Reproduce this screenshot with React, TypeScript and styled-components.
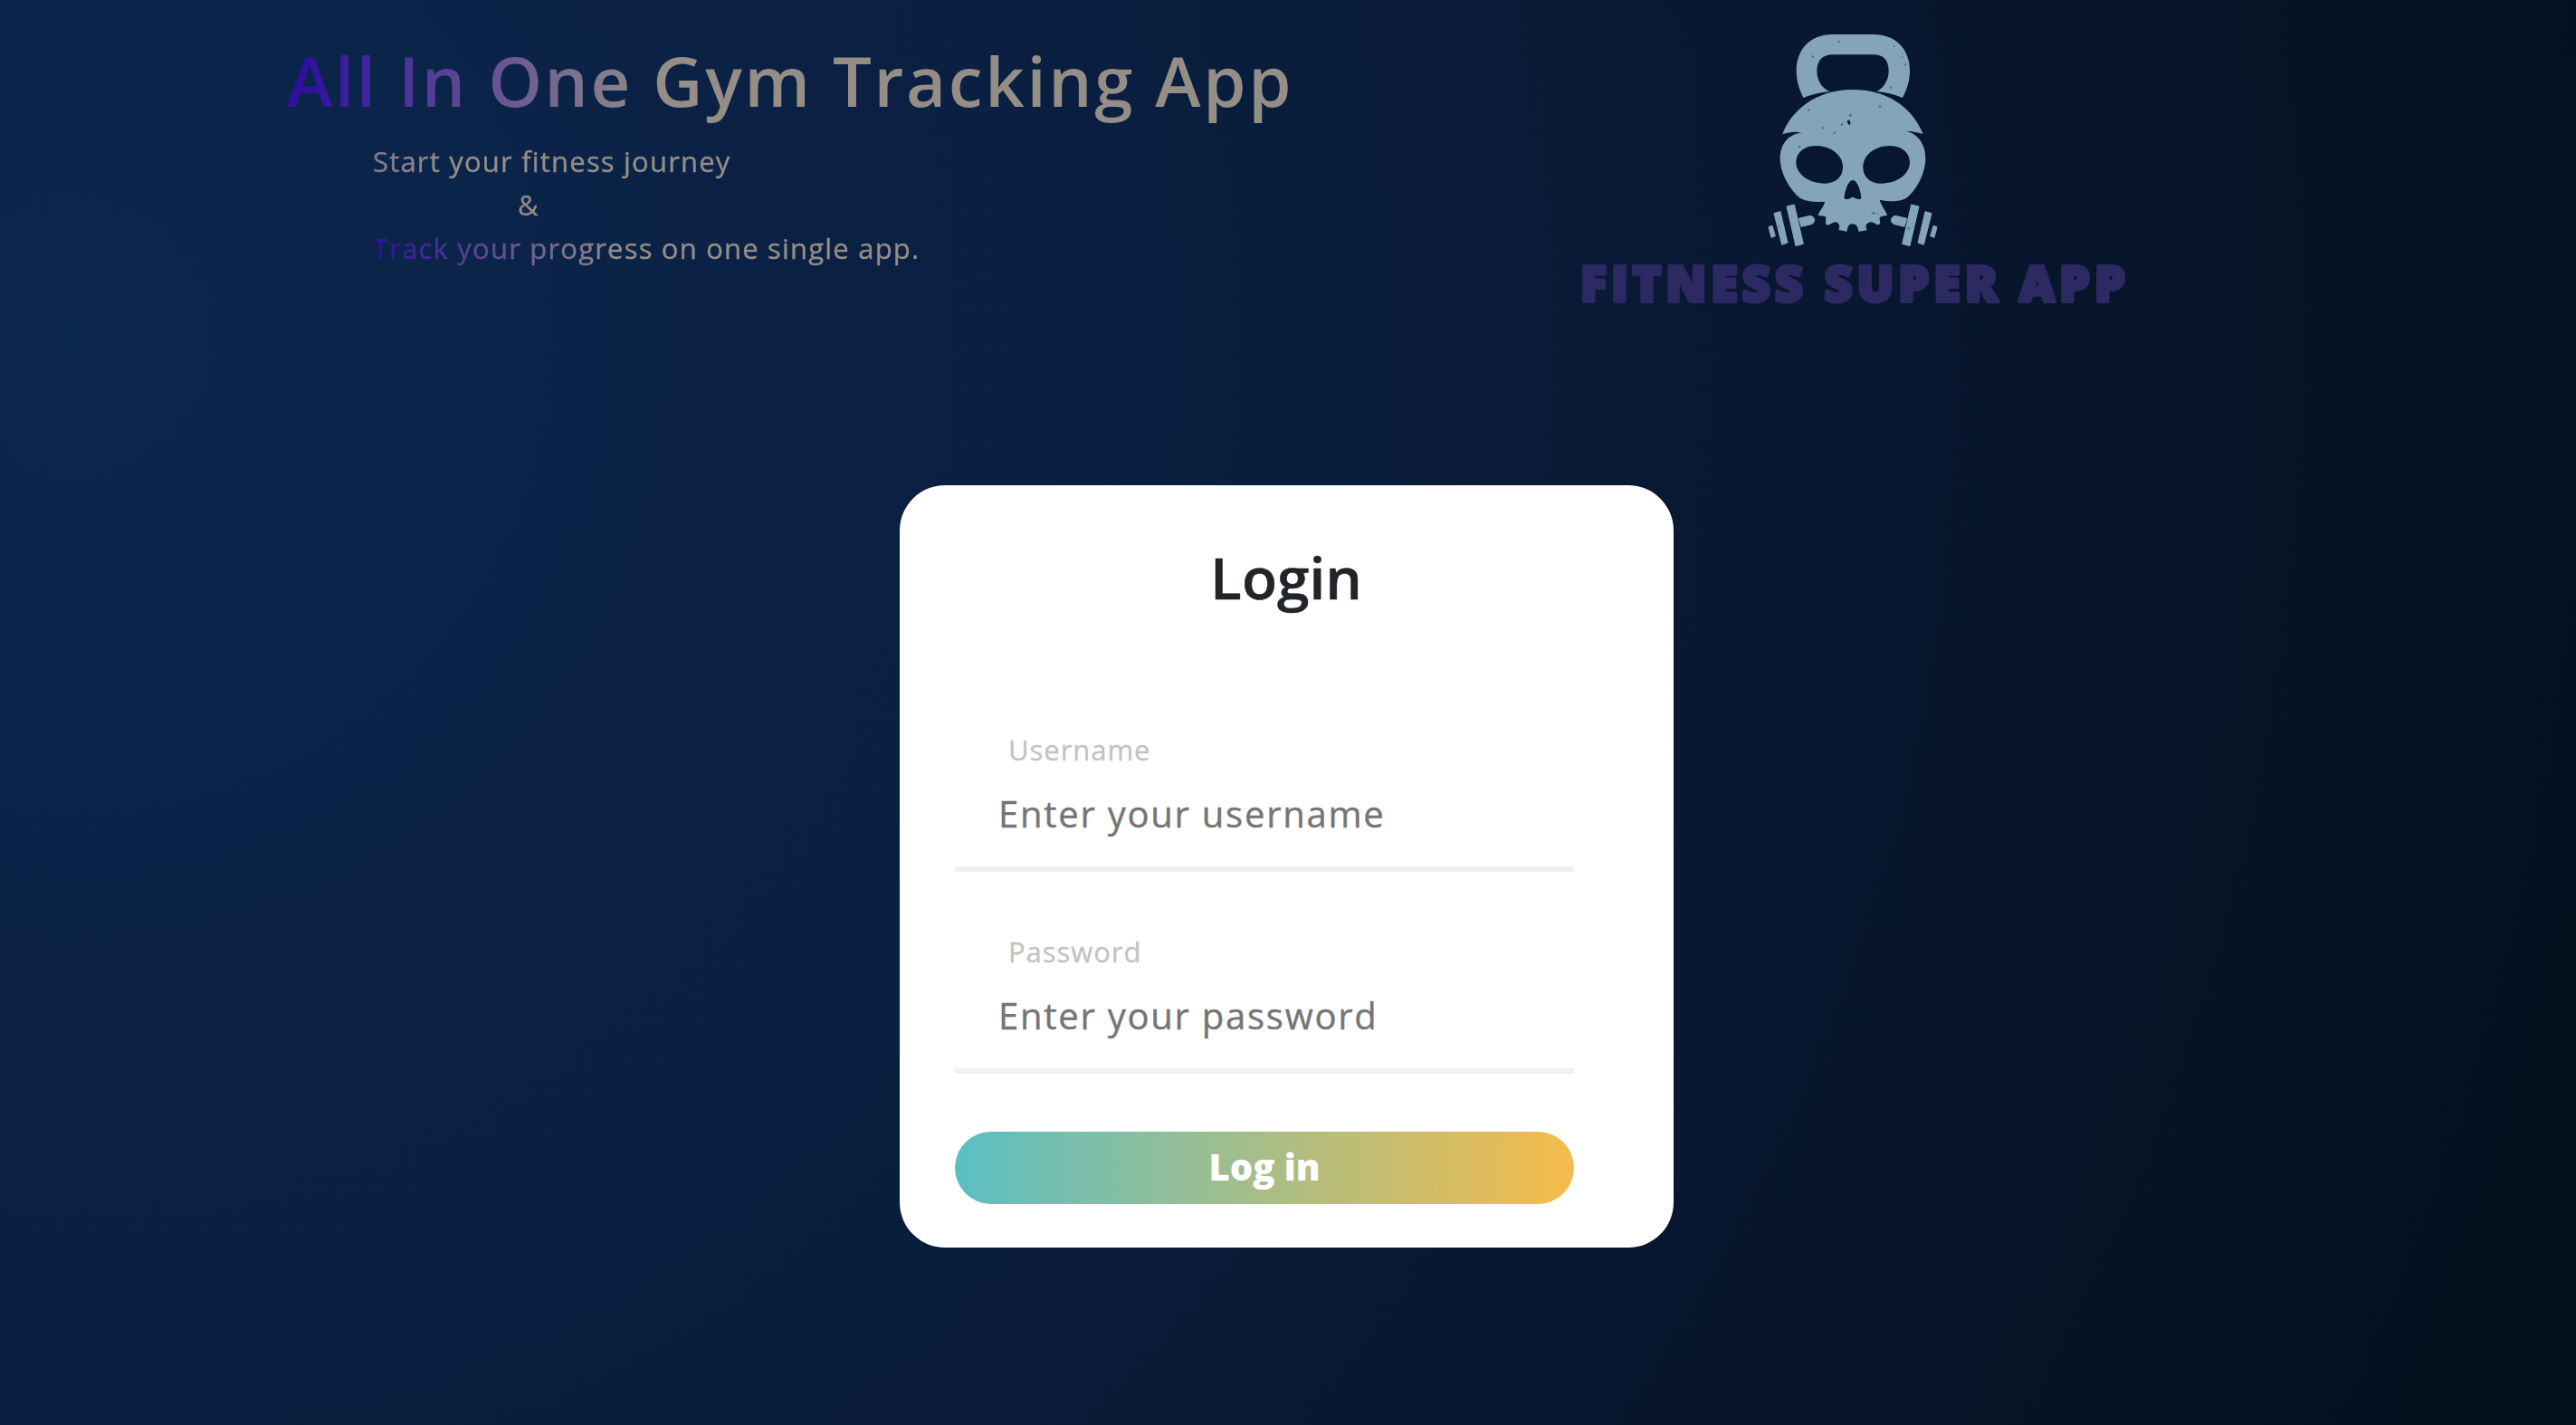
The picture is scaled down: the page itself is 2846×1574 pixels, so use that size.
import React from 'react';
import styled, { createGlobalStyle } from 'styled-components';

const GlobalStyle = createGlobalStyle`
  *, *::before, *::after { box-sizing: border-box; }
  body { margin: 0; background: #04101c; font-family: "Open Sans", "Noto Sans", sans-serif; }
`;

const Page = styled.main`
  display: flex;
  flex-direction: column;
  align-items: flex-start;
  width: 2846px;
  height: 1574px;
  overflow: hidden;
  background: radial-gradient(circle 3150px at 80px 370px, #0b284f 0%, #0b2246 22%, #0a1e3f 38%, #081832 60%, #061427 76%, #05101e 92%);
`;

const Header = styled.header`
  display: flex;
  width: 100%;
  height: 536px;
`;

const Hero = styled.section`
  width: 1748px;
  padding: 39px 0 0 317px;
`;

const GradientText = styled.span<{ $from: string; $start: number; $end: number }>`
  background: linear-gradient(to right, ${p => p.$from} ${p => p.$start}px, #948e87 ${p => p.$end}px);
  background-clip: text;
  -webkit-background-clip: text;
  color: transparent;
`;

const Title = styled.h1`
  margin: 0;
  font-size: 76px;
  font-weight: 600;
  line-height: 100px;
  letter-spacing: 2.65px;
  white-space: nowrap;
`;

const Tagline = styled.p`
  display: flex;
  flex-direction: column;
  align-items: flex-start;
  margin: 15px 0 0;
  padding-left: 95px;
  font-size: 31px;
  line-height: 48px;
  letter-spacing: 1.2px;
  -webkit-text-stroke: 0.4px transparent;
`;

const Ampersand = styled.span`
  padding-left: 160px;
`;

const Brand = styled.figure`
  display: flex;
  flex-direction: column;
  align-items: center;
  width: 600px;
  margin: 0;
  padding-top: 20px;
`;

const Emblem = styled.svg`
  display: block;
  width: 240px;
  height: 260px;
  margin-left: 3px;
`;

const BrandName = styled.svg`
  display: block;
  width: 600px;
  height: 68px;
  overflow: visible;
  font: 800 54px "Open Sans", "Noto Sans", sans-serif;
`;

const Card = styled.section`
  display: flex;
  flex-direction: column;
  width: 855px;
  height: 842px;
  margin-left: 994px;
  padding: 58px 110px 48px 61px;
  border-radius: 50px;
  background: #fff;
`;

const CardTitle = styled.h2`
  width: 732px;
  margin: 0;
  font: 600 64px/87px "Open Sans", "Noto Sans", sans-serif;
  text-align: center;
  color: #212529;
  -webkit-text-stroke: 0.5px #212529;
`;

const Form = styled.form`
  display: flex;
  flex-direction: column;
  margin-top: 123px;
`;

const Field = styled.div`
  display: flex;
  flex-direction: column;
  height: 159px;
  margin-bottom: 64px;
  border-bottom: 6px solid #f0f0f0;
`;

const Label = styled.label`
  padding-left: 59px;
  font-size: 31px;
  line-height: 48px;
  letter-spacing: 0.95px;
  color: #c2c2c2;
  -webkit-text-stroke: 0.3px #c2c2c2;
`;

const Input = styled.input`
  width: 100%;
  height: 80px;
  margin-top: 6px;
  padding: 0 0 0 48px;
  border: 0;
  outline: 0;
  background: transparent;
  font: 400 40px "Open Sans", "Noto Sans", sans-serif;
  letter-spacing: 1.75px;
  &::placeholder { color: #757575; opacity: 1; -webkit-text-stroke: 0.4px #757575; }
`;

const Submit = styled.button`
  height: 80px;
  padding: 0 0 4px;
  border: 0;
  border-radius: 40px;
  background: linear-gradient(to right, #5bbfc4, #f5bc4b);
  color: #fff;
  font: 800 40px "Open Sans", "Noto Sans", sans-serif;
`;

const DUMBBELL = (
  <>
    <path d="M172 664 L205 656 A14 14 0 0 1 214 683 L180 691 Z" />
    <path d="M132 624 L157 618 L187 748 L162 755 Z" />
    <path d="M90 647 L111 641 L135 744 L116 751 Z" />
    <path d="M72 692 L84 688 L94 722 L81 727 Z" />
  </>
);

const SPECKS = [
  [306, 78, 4], [218, 128, 4], [488, 93, 3], [515, 128, 3], [525, 154, 4], [476, 230, 4],
  [205, 305, 4], [441, 293, 4], [343, 322, 5], [315, 352, 4], [252, 364, 4], [290, 380, 4],
  [174, 427, 4], [176, 382, 3], [419, 646, 5], [433, 648, 3], [105, 691, 3], [537, 697, 4],
];

function KettlebellSkull() {
  return (
    <Emblem viewBox="0 0 720 780" fill="#84a5b9">
      <path
        fillRule="evenodd"
        d="M187 264 C174 236 164 210 164 174 C164 104 210 54 284 54 L420 54 C494 54 540 104 540 174 C540 210 530 236 516 264 C490 253 462 246 430 243 C456 230 470 204 470 174 C470 140 452 121 420 121 L284 121 C252 121 232 140 232 174 C232 206 247 232 275 243 C243 246 214 253 187 264 Z"
      />
      <path
        fillRule="evenodd"
        d="M118 384 C154 292 244 237 351 237 C458 237 546 290 584 384 C565 378 546 374 526 374 C568 382 592 420 592 464 C592 516 560 574 526 598 C504 610 470 608 440 602 C444 620 460 636 465 654 C456 656 444 655 440 662 C438 670 446 678 438 684 C428 688 424 676 410 676 C396 678 390 690 398 701 C388 706 378 706 370 707 C368 690 362 682 350 682 C338 682 333 692 332 707 C324 706 312 704 304 701 C310 690 306 678 294 676 C280 676 274 690 264 684 C256 678 266 664 260 658 C254 654 244 656 236 654 C240 636 256 626 258 608 C230 610 196 608 176 596 C140 566 110 512 110 464 C110 420 136 384 180 380 C158 374 140 380 118 384 Z
        M228 423 C186 423 163 448 163 478 C163 516 204 548 258 548 C296 548 318 524 318 494 C318 456 282 423 228 423 Z
        M474 423 C516 423 540 448 540 478 C540 516 500 548 446 548 C406 548 385 524 385 494 C385 456 422 423 474 423 Z
        M351 537 C334 537 322 584 323 596 C327 605 339 598 351 593 C363 598 375 605 379 596 C380 584 368 537 351 537 Z"
      />
      <g stroke="#84a5b9" strokeWidth="3" strokeLinejoin="round">
        {DUMBBELL}
        <g transform="translate(702 0) scale(-1 1)">{DUMBBELL}</g>
      </g>
      <g fill="#54748a">
        {SPECKS.map(([x, y, r]) => (
          <circle key={`${x}-${y}`} cx={x} cy={y} r={r} />
        ))}
      </g>
      <path fill="#0b1f3a" d="M331 341 L340 337 L344 350 L338 355 Z" />
    </Emblem>
  );
}

export default function App() {
  return (
    <>
      <GlobalStyle />
      <Page>
        <Header>
          <Hero>
            <Title>
              <GradientText $from="#2f109f" $start={20} $end={410}>All In One Gym Tracking App</GradientText>
            </Title>
            <Tagline>
              <GradientText $from="#877690" $start={0} $end={90}>Start your fitness journey</GradientText>
              <Ampersand>
                <GradientText $from="#8e8589" $start={0} $end={30}>&amp;</GradientText>
              </Ampersand>
              <GradientText $from="#2f109f" $start={5} $end={270}>Track your progress on one single app.</GradientText>
            </Tagline>
          </Hero>
          <Brand>
            <KettlebellSkull />
            <BrandName viewBox="0 0 600 68">
              <text
                x="-2"
                y="53"
                textLength="602"
                lengthAdjust="spacing"
                fill="#2d2962"
                stroke="#2d2962"
                strokeWidth="4"
                strokeLinejoin="round"
              >
                FITNESS SUPER APP
              </text>
            </BrandName>
          </Brand>
        </Header>
        <Card>
          <CardTitle>Login</CardTitle>
          <Form onSubmit={e => e.preventDefault()}>
            <Field>
              <Label htmlFor="username">Username</Label>
              <Input id="username" type="text" placeholder="Enter your username" />
            </Field>
            <Field>
              <Label htmlFor="password">Password</Label>
              <Input id="password" type="password" placeholder="Enter your password" />
            </Field>
            <Submit type="submit">Log in</Submit>
          </Form>
        </Card>
      </Page>
    </>
  );
}
